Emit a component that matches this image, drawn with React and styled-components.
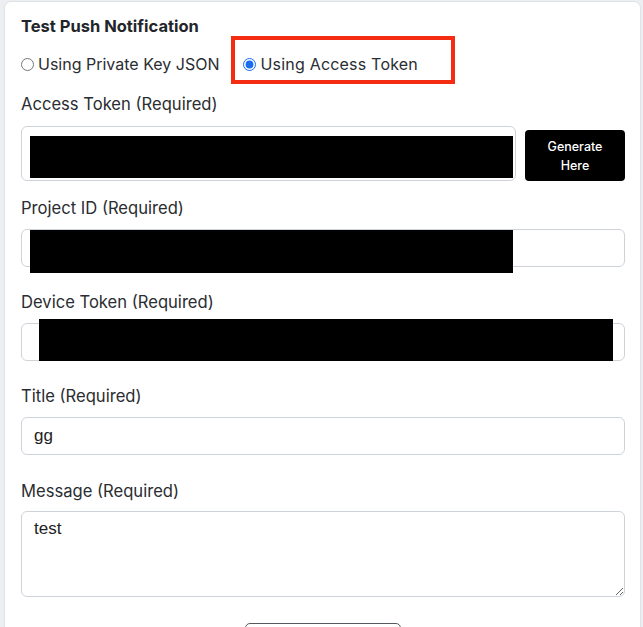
import React from "react";
import styled, { createGlobalStyle } from "styled-components";

const Global = createGlobalStyle`
  html, body { margin: 0; padding: 0; background: #eceef1; }
  body { font-family: Inter, "Noto Sans", sans-serif; overflow: hidden; }
  * { box-sizing: border-box; }
`;

const Page = styled.div`
  padding: 1px 2px 0 4px;
  height: 627px;
  overflow: hidden;
`;

const Card = styled.div`
  background: #ffffff;
  border: 1px solid #dfe2e6;
  border-radius: 7px;
  padding: 12px 15px 0 16px;
  min-height: 700px;
`;

const Heading = styled.h5`
  margin: 0;
  font-size: 16.5px;
  line-height: 24px;
  font-weight: 700;
  color: #222529;
`;

const RadioRow = styled.div`
  display: flex;
  align-items: center;
  margin-top: -2px;
  height: 48px;
`;

const RadioBox = styled.label`
  display: flex;
  align-items: center;
  gap: 4px;
  height: 48px;
  padding: ${(p) => (p.$highlight ? "8px 33px 0 8px" : "8px 0 0 0")};
  margin-left: ${(p) => (p.$highlight ? "12px" : "0")};
  border: ${(p) => (p.$highlight ? "4px solid #f42c11" : "none")};
  letter-spacing: ${(p) => (p.$highlight ? "0.2px" : "0")};
  font-size: 16px;
  color: #2a2d31;
  cursor: pointer;
`;

const Radio = styled.input`
  width: 13px;
  height: 13px;
  margin: 0;
  accent-color: #1a6cf0;
`;

const Label = styled.div`
  font-size: 16.6px;
  line-height: 24px;
  color: #2a2d31;
  margin-top: ${(p) => p.$mt || 0}px;
  margin-bottom: ${(p) => p.$mb || 9}px;
`;

const Group = styled.div`
  margin-bottom: ${(p) => (p.$mb === undefined ? 23 : p.$mb)}px;
`;

const TokenRow = styled.div`
  display: flex;
  align-items: flex-start;
  gap: 9px;
`;

const FieldWrap = styled.div`
  position: relative;
  flex: 1;
`;

const Input = styled.input`
  display: block;
  width: 100%;
  height: ${(p) => p.$h || 38}px;
  border: 1px solid #ced3da;
  border-radius: 6px;
  padding: 0 12px;
  font-family: "Liberation Sans", Arial, sans-serif;
  font-size: 17px;
  color: #222;
  background: #fff;
  outline: none;
`;

const TextArea = styled.textarea`
  display: block;
  width: 100%;
  height: 86px;
  border: 1px solid #ced3da;
  border-radius: 6px;
  padding: 7px 12px;
  font-family: "Liberation Sans", Arial, sans-serif;
  font-size: 17px;
  color: #222;
  background: #fff;
  outline: none;
  resize: vertical;
`;

const Redact = styled.div`
  position: absolute;
  background: #000;
  pointer-events: none;
`;

const GenerateButton = styled.button`
  flex: 0 0 100px;
  height: 51px;
  margin-top: 4px;
  background: #000;
  color: #fff;
  border: none;
  border-radius: 4px;
  font-family: Inter, "Noto Sans", sans-serif;
  font-size: 12.5px;
  font-weight: 500;
  line-height: 19px;
  padding: 0 10px;
`;

const Footer = styled.div`
  display: flex;
  justify-content: center;
  margin-top: 26px;
`;

const OutlineButton = styled.button`
  width: 156px;
  height: 40px;
  background: #fff;
  border: 1px solid #555a60;
  border-radius: 5px;
`;

export default function App() {
  return (
    <Page>
      <Global />
      <Card>
        <Heading>Test Push Notification</Heading>
        <RadioRow>
          <RadioBox>
            <Radio type="radio" name="mode" />
            Using Private Key JSON
          </RadioBox>
          <RadioBox $highlight>
            <Radio type="radio" name="mode" defaultChecked />
            Using Access Token
          </RadioBox>
        </RadioRow>
        <Group $mb={15}>
          <Label $mt={8} $mb={10}>Access Token (Required)</Label>
          <TokenRow>
            <FieldWrap>
              <Input $h={55} defaultValue="" readOnly />
              <Redact style={{ left: 9, top: 10, width: 483, height: 42 }} />
            </FieldWrap>
            <GenerateButton>
              Generate
              <br />
              Here
            </GenerateButton>
          </TokenRow>
        </Group>
        <Group>
          <Label>Project ID (Required)</Label>
          <FieldWrap>
            <Input defaultValue="" readOnly />
            <Redact style={{ left: 9, top: 1, width: 483, height: 43 }} />
          </FieldWrap>
        </Group>
        <Group>
          <Label>Device Token (Required)</Label>
          <FieldWrap>
            <Input defaultValue="" readOnly />
            <Redact style={{ left: 18, top: -4, width: 574, height: 42 }} />
          </FieldWrap>
        </Group>
        <Group $mb={24}>
          <Label>Title (Required)</Label>
          <Input defaultValue="gg" readOnly />
        </Group>
        <Group $mb={0}>
          <Label $mb={8}>Message (Required)</Label>
          <TextArea defaultValue="test" readOnly />
        </Group>
        <Footer>
          <OutlineButton type="submit" />
        </Footer>
      </Card>
    </Page>
  );
}
